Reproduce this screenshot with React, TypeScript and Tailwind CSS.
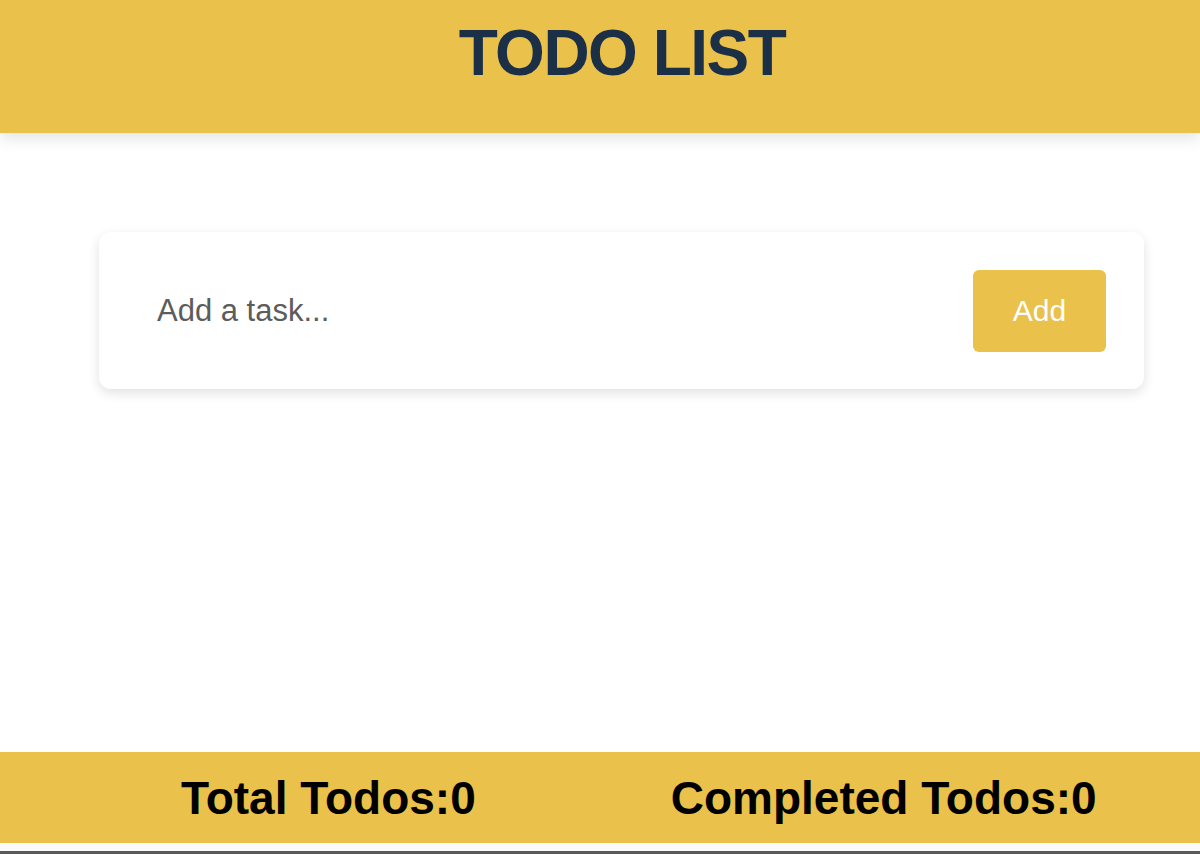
import React from "react";

export default function App() {
  return (
    <div
      className="w-[1200px] h-[854px] bg-white flex flex-col overflow-hidden"
      style={{ fontFamily: '"Liberation Sans", Arial, sans-serif' }}
    >
      <header className="h-[133px] shrink-0 bg-[#e9c14b] shadow-[0_6px_14px_rgba(0,0,0,0.1)] relative z-10 pl-[44px]">
        <h1 className="pt-[21px] text-center text-[64px] leading-none font-bold tracking-[-1.5px] text-[#1b2f46]">
          TODO LIST
        </h1>
      </header>

      <main className="flex-1">
        <div className="ml-[99px] mt-[99px] w-[1045px] h-[157px] bg-white rounded-xl shadow-[0_4px_12px_rgba(0,0,0,0.12)] flex items-center px-[38px] gap-4">
          <input
            type="text"
            placeholder="Add a task..."
            className="flex-1 h-[82px] px-[20px] text-[31px] text-[#555] placeholder:text-[#5c5c5c] outline-none bg-transparent"
            style={{ fontFamily: '"Liberation Sans", Arial, sans-serif' }}
          />
          <button
            className="w-[133px] h-[82px] bg-[#e9c14b] rounded-md text-white text-[30px]"
            style={{ fontFamily: '"Liberation Sans", Arial, sans-serif' }}
          >
            Add
          </button>
        </div>
      </main>

      <footer className="h-[91px] shrink-0 bg-[#e9c14b] flex items-center pl-[181px] gap-[195px] text-[46px] font-bold text-black leading-none">
        <span>Total Todos:0</span>
        <span>Completed Todos:0</span>
      </footer>
      <div className="h-[8px] shrink-0 bg-[#fafafa]" />
      <div className="h-[3px] shrink-0 bg-[#5a5a5a]" />
    </div>
  );
}
